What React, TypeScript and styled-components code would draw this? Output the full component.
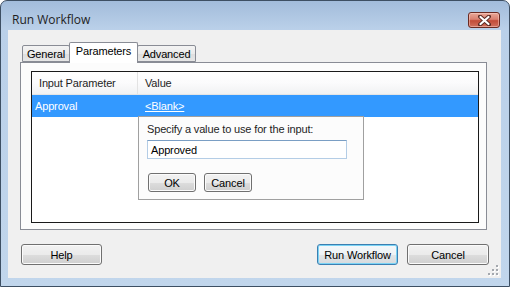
import React from 'react';
import styled, { createGlobalStyle } from 'styled-components';

const GlobalStyle = createGlobalStyle`
  html, body {
    margin: 0;
    padding: 0;
    background: #ffffff;
  }
  * {
    box-sizing: border-box;
  }
`;

const Window = styled.div`
  width: 510px;
  height: 287px;
  border: 1px solid #3d4f63;
  border-radius: 7px 7px 0 0;
  background: linear-gradient(#a2bcdb 0px, #bad0e9 28px, #c1d6ec 100%);
  display: flex;
  flex-direction: column;
  font-family: 'Liberation Sans', Arial, sans-serif;
  font-size: 11px;
  letter-spacing: -0.15px;
  color: #000;
  overflow: hidden;
`;

const TitleBar = styled.div`
  height: 29px;
  display: flex;
  align-items: center;
  justify-content: space-between;
  padding: 7px 9px 0 11px;
`;

const Title = styled.span`
  font-family: 'Open Sans', 'Noto Sans', sans-serif;
  font-size: 12px;
  letter-spacing: 0;
  color: #1e1e1e;
`;

const CloseButton = styled.div`
  width: 32px;
  height: 16px;
  margin-top: 2px;
  border: 1px solid #6a2a22;
  border-radius: 3px;
  background: linear-gradient(#e9a898 0%, #d98070 45%, #c24b37 55%, #d0705e 100%);
  box-shadow: inset 0 0 0 1px rgba(255, 220, 210, 0.45);
  display: flex;
  align-items: center;
  justify-content: center;
`;

const Client = styled.div`
  flex: 1;
  margin: 0 8px 8px 7px;
  background: #f0f0f0;
  display: flex;
  flex-direction: column;
  padding-top: 12px;
`;

const TabArea = styled.div`
  margin: 0 14px 0 12px;
  display: flex;
  flex-direction: column;
`;

const TabStrip = styled.div`
  height: 20px;
  display: flex;
  align-items: flex-end;
  padding-left: 2px;
`;

const Tab = styled.div<{ $active?: boolean; $width: number }>`
  width: ${({ $width }) => $width}px;
  height: ${({ $active }) => ($active ? 21 : 17)}px;
  margin-bottom: ${({ $active }) => ($active ? -1 : 0)}px;
  margin-left: -1px;
  border: 1px solid #898c95;
  border-bottom: ${({ $active }) => ($active ? 'none' : '1px solid #898c95')};
  border-radius: 2px 2px 0 0;
  background: ${({ $active }) =>
    $active ? '#ffffff' : 'linear-gradient(#f3f3f3 0%, #ebebeb 50%, #dedede 51%, #e6e6e6 100%)'};
  position: relative;
  z-index: ${({ $active }) => ($active ? 2 : 1)};
  display: flex;
  align-items: center;
  justify-content: center;
  padding-top: ${({ $active }) => ($active ? 0 : 1)}px;
  padding-bottom: ${({ $active }) => ($active ? 4 : 0)}px;
  font-size: 11px;

  &:first-child {
    margin-left: 0;
  }
`;

const Panel = styled.div`
  height: 168px;
  border: 1px solid #898c95;
  background: #fcfcfc;
  padding: 8px 7px 6px 10px;
  display: flex;
`;

const ListView = styled.div`
  flex: 1;
  border: 1px solid #1a1a1a;
  background: #ffffff;
  position: relative;
`;

const HeaderRow = styled.div`
  height: 23px;
  display: flex;
  background: linear-gradient(#ffffff 0%, #fbfbfc 50%, #f1f2f3 100%);
  border-bottom: 1px solid #e5e5e5;
`;

const HeaderCell = styled.div<{ $width?: number }>`
  width: ${({ $width }) => ($width ? `${$width}px` : 'auto')};
  flex: ${({ $width }) => ($width ? 'none' : 1)};
  display: flex;
  align-items: center;
  padding-left: 7px;
  border-right: ${({ $width }) => ($width ? '1px solid #e3e3e3' : 'none')};
  color: #1e1e1e;
`;

const Row = styled.div<{ $selected?: boolean }>`
  height: 22px;
  display: flex;
  background: ${({ $selected }) => ($selected ? '#3399ff' : 'transparent')};
  color: ${({ $selected }) => ($selected ? '#ffffff' : '#000')};
`;

const Cell = styled.div<{ $width?: number }>`
  width: ${({ $width }) => ($width ? `${$width}px` : 'auto')};
  flex: ${({ $width }) => ($width ? 'none' : 1)};
  display: flex;
  align-items: center;
  padding-left: ${({ $width }) => ($width ? 3 : 7)}px;
`;

const LinkText = styled.span`
  text-decoration: underline;
`;

const Popup = styled.div`
  position: absolute;
  left: 106px;
  top: 44px;
  width: 226px;
  height: 84px;
  border: 1px solid #a0a0a0;
  background: #fcfcfc;
  padding: 5px 8px 0 8px;
  display: flex;
  flex-direction: column;
  z-index: 3;
`;

const PopupLabel = styled.div`
  line-height: 14px;
  margin-bottom: 4px;
  color: #1e1e1e;
`;

const TextInput = styled.div`
  width: 200px;
  height: 19px;
  border: 1px solid #b4cde6;
  border-top-color: #7a9ec4;
  background: #ffffff;
  display: flex;
  align-items: center;
  padding-left: 3px;
`;

const PopupButtons = styled.div`
  display: flex;
  gap: 8px;
  margin-top: 14px;
  padding-left: 1px;
`;

const Button = styled.div<{ $width: number; $height: number; $default?: boolean }>`
  width: ${({ $width }) => $width}px;
  height: ${({ $height }) => $height}px;
  border: 1px solid ${({ $default }) => ($default ? '#3c7fb1' : '#707070')};
  border-radius: 3px;
  background: ${({ $default }) =>
    $default
      ? 'linear-gradient(#f4f8fb 0%, #eef2f5 50%, #e1e5e8 51%, #d6dadd 100%)'
      : 'linear-gradient(#f2f2f2 0%, #ebebeb 50%, #dddddd 51%, #cfcfcf 100%)'};
  box-shadow: inset 0 0 0 1px ${({ $default }) => ($default ? '#7ad3f5' : '#fbfbfb')};
  display: flex;
  align-items: center;
  justify-content: center;
  font-size: 11px;
  color: #000;
`;

const ButtonRow = styled.div`
  margin-top: 14px;
  padding: 0 12px 0 13px;
  display: flex;
  align-items: center;
  gap: 9px;
`;

const Spacer = styled.div`
  flex: 1;
`;

const GripRow = styled.div`
  flex: 1;
  display: flex;
  justify-content: flex-end;
  align-items: flex-end;
  padding: 0 2px 2px 0;
`;

const tabs = [
  { label: 'General', width: 48 },
  { label: 'Parameters', width: 69, active: true },
  { label: 'Advanced', width: 59 },
];

const CloseGlyph = () => (
  <svg width="13" height="11" viewBox="0 0 13 11">
    <path
      d="M2 1.5 L11 9.5 M11 1.5 L2 9.5"
      stroke="#5a2a24"
      strokeWidth="4"
      strokeLinecap="round"
      fill="none"
    />
    <path
      d="M2.5 2 L10.5 9 M10.5 2 L2.5 9"
      stroke="#ffffff"
      strokeWidth="2.2"
      strokeLinecap="round"
      fill="none"
    />
  </svg>
);

const Grip = () => {
  const dots = [
    [8, 0],
    [4, 4],
    [8, 4],
    [0, 8],
    [4, 8],
    [8, 8],
  ];
  return (
    <svg width="11" height="11" viewBox="0 0 11 11">
      {dots.map(([x, y]) => (
        <g key={`${x}-${y}`}>
          <rect x={x + 1} y={y + 1} width="2" height="2" fill="#ffffff" />
          <rect x={x} y={y} width="2" height="2" fill="#a4a8ae" />
        </g>
      ))}
    </svg>
  );
};

const App: React.FC = () => {
  return (
    <>
      <GlobalStyle />
      <Window>
        <TitleBar>
          <Title>Run Workflow</Title>
          <CloseButton>
            <CloseGlyph />
          </CloseButton>
        </TitleBar>
        <Client>
          <TabArea>
            <TabStrip>
              {tabs.map((t) => (
                <Tab key={t.label} $active={t.active} $width={t.width}>
                  {t.label}
                </Tab>
              ))}
            </TabStrip>
            <Panel>
              <ListView>
                <HeaderRow>
                  <HeaderCell $width={106}>Input Parameter</HeaderCell>
                  <HeaderCell>Value</HeaderCell>
                </HeaderRow>
                <Row $selected>
                  <Cell $width={106}>Approval</Cell>
                  <Cell>
                    <LinkText>&lt;Blank&gt;</LinkText>
                  </Cell>
                </Row>
                <Popup>
                  <PopupLabel>Specify a value to use for the input:</PopupLabel>
                  <TextInput>Approved</TextInput>
                  <PopupButtons>
                    <Button $width={48} $height={19}>OK</Button>
                    <Button $width={48} $height={19}>Cancel</Button>
                  </PopupButtons>
                </Popup>
              </ListView>
            </Panel>
          </TabArea>
          <ButtonRow>
            <Button $width={81} $height={21}>Help</Button>
            <Spacer />
            <Button $width={81} $height={21} $default>
              Run Workflow
            </Button>
            <Button $width={82} $height={21}>Cancel</Button>
          </ButtonRow>
          <GripRow>
            <Grip />
          </GripRow>
        </Client>
      </Window>
    </>
  );
};

export default App;
